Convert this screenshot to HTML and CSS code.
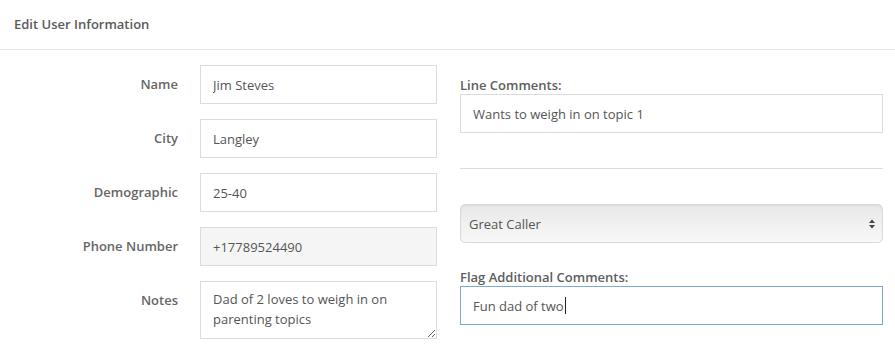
FILE: index.html
```html
<!DOCTYPE html>
<html>
<head lang="en">
  <meta charset="UTF-8">
  <title>Edit User Information</title>
  <link rel="stylesheet" href="styles.css">
</head>
<body>
<div class="panel">
  <div class="panel-head">Edit User Information</div>
  <div class="panel-body">
    <div class="left">
      <div class="row">
        <label>Name</label>
        <input class="field" type="text" value="Jim Steves">
      </div>
      <div class="row">
        <label>City</label>
        <input class="field" type="text" value="Langley">
      </div>
      <div class="row">
        <label>Demographic</label>
        <input class="field" type="text" value="25-40">
      </div>
      <div class="row">
        <label>Phone Number</label>
        <input class="field" type="text" value="+17789524490" readonly>
      </div>
      <div class="row">
        <label>Notes</label>
        <textarea class="field notes">Dad of 2 loves to weigh in on parenting topics</textarea>
      </div>
    </div>
    <div class="right">
      <label class="top-label">Line Comments:</label>
      <input class="field wide" type="text" value="Wants to weigh in on topic 1">
      <hr>
      <div class="select">
        <span>Great Caller</span>
        <svg width="8" height="12" viewBox="0 0 8 12"><path d="M4 1.5 L7 5 H1 Z M4 10.5 L7 7 H1 Z" fill="#444"/></svg>
      </div>
      <label class="top-label flag">Flag Additional Comments:</label>
      <div class="field wide focus">Fun dad of two<span class="caret"></span></div>
    </div>
  </div>
</div>
</body>
</html>
```

FILE: styles.css
```css
* {
  margin: 0;
  padding: 0;
  box-sizing: border-box;
}

body {
  font-family: "Open Sans", "Liberation Sans", sans-serif;
  font-size: 13px;
  color: #555;
  background: #fff;
}

.panel-head {
  height: 50px;
  padding: 0 14px;
  line-height: 48px;
  font-weight: 600;
  color: #5a5a5a;
  border-bottom: 1px solid #e5e5e5;
}

.panel-body {
  display: flex;
  padding: 15px 12px 0 0;
}

.left {
  width: 437px;
}

.row {
  display: flex;
  align-items: flex-start;
  margin-bottom: 15px;
}

.row label {
  width: 178px;
  text-align: right;
  font-weight: 600;
  color: #666;
  line-height: 39px;
  margin-right: 22px;
}

.field {
  display: block;
  width: 237px;
  height: 39px;
  padding: 0 12px;
  border: 1px solid #dcdcdc;
  background: #fff;
  font-family: inherit;
  font-size: 13px;
  color: #555;
  outline: none;
}

.field[readonly] {
  background: #f5f5f5;
}

.notes {
  height: 58px;
  padding: 7px 12px;
  line-height: 20px;
}

.right {
  flex: 1;
  margin-left: 23px;
}

.top-label {
  display: block;
  font-weight: 600;
  color: #5e5e5e;
  margin-top: 11px;
  line-height: 18px;
}

.wide {
  width: 100%;
  height: 39px;
}

div.field {
  display: flex;
  align-items: center;
}

hr {
  border: 0;
  border-top: 1px solid #dcdcdc;
  margin: 35px 0 35px;
}

.select {
  display: flex;
  align-items: center;
  justify-content: space-between;
  height: 39px;
  padding: 0 6px 0 8px;
  border-radius: 5px;
  border: 1px solid #d9d9d9;
  background: linear-gradient(#e8e8e8, #f8f8f8);
  box-shadow: inset 0 1px 2px rgba(0, 0, 0, 0.06);
  font-size: 13px;
  color: #555;
}

.flag {
  margin-top: 25px;
}

.focus {
  border-color: #7ea7da;
}

.caret {
  display: inline-block;
  width: 1px;
  height: 17px;
  background: #222;
  margin-left: 1px;
}
```
